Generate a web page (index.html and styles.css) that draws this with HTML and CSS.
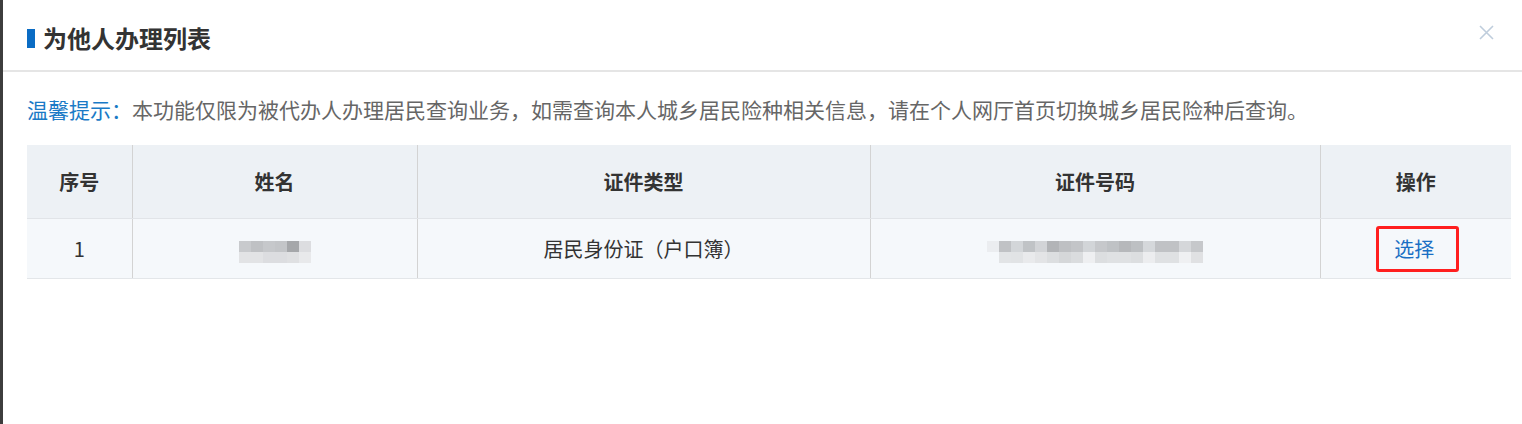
FILE: index.html
```html
<!DOCTYPE html>
<html lang="zh-CN">
<head>
  <meta charset="UTF-8">
  <meta name="viewport" content="width=device-width, initial-scale=1.0">
  <title>为他人办理列表</title>
  <link rel="stylesheet" href="styles.css">
</head>
<body>
  <div class="dialog">
    <div class="dialog-head">
      <h2 class="dialog-title">为他人办理列表</h2>
      <span class="dialog-close" title="关闭">
        <svg width="15" height="15" viewBox="0 0 15 15">
          <path d="M1 1 L14 14 M14 1 L1 14" stroke="#bfcddc" stroke-width="1.6" fill="none"/>
        </svg>
      </span>
    </div>

    <div class="dialog-body">
      <!-- 温馨提示 -->
      <p class="tip"><span class="tip-label">温馨提示：</span>本功能仅限为被代办人办理居民查询业务，如需查询本人城乡居民险种相关信息，请在个人网厅首页切换城乡居民险种后查询。</p>

      <!-- 代办人列表 -->
      <table class="list">
        <colgroup>
          <col class="c-no">
          <col class="c-name">
          <col class="c-type">
          <col class="c-id">
          <col class="c-op">
        </colgroup>
        <thead>
          <tr>
            <th>序号</th>
            <th>姓名</th>
            <th>证件类型</th>
            <th>证件号码</th>
            <th>操作</th>
          </tr>
        </thead>
        <tbody>
          <tr>
            <td>1</td>
            <td>
              <svg class="mosaic" width="72" height="22" viewBox="0 0 72 22">
                <rect x="0" y="0" width="12" height="11" fill="#c8cacd"/>
                <rect x="12" y="0" width="12" height="11" fill="#bfc1c4"/>
                <rect x="24" y="0" width="12" height="11" fill="#c6c8cb"/>
                <rect x="36" y="0" width="12" height="11" fill="#c3c5c8"/>
                <rect x="48" y="0" width="12" height="11" fill="#a5a7aa"/>
                <rect x="60" y="0" width="12" height="11" fill="#dcdde0"/>
                <rect x="0" y="11" width="12" height="11" fill="#e2e3e5"/>
                <rect x="12" y="11" width="12" height="11" fill="#e2e3e5"/>
                <rect x="24" y="11" width="12" height="11" fill="#dcdde0"/>
                <rect x="36" y="11" width="12" height="11" fill="#dcdde0"/>
                <rect x="48" y="11" width="12" height="11" fill="#dfe0e2"/>
                <rect x="60" y="11" width="12" height="11" fill="#e8e9eb"/>
              </svg>
            </td>
            <td>居民身份证（户口簿）</td>
            <td>
              <svg class="mosaic" width="216" height="22" viewBox="0 0 216 22">
                <rect x="0" y="0" width="12" height="11" fill="#ebedf0"/>
                <rect x="12" y="0" width="12" height="11" fill="#c0c2c5"/>
                <rect x="24" y="0" width="12" height="11" fill="#d3d6d9"/>
                <rect x="36" y="0" width="12" height="11" fill="#c0c3c6"/>
                <rect x="48" y="0" width="12" height="11" fill="#d2d4d7"/>
                <rect x="60" y="0" width="12" height="11" fill="#b2b4b7"/>
                <rect x="72" y="0" width="12" height="11" fill="#bec0c3"/>
                <rect x="84" y="0" width="12" height="11" fill="#c3c5c8"/>
                <rect x="96" y="0" width="12" height="11" fill="#d2d5d8"/>
                <rect x="108" y="0" width="12" height="11" fill="#c6c8cb"/>
                <rect x="120" y="0" width="12" height="11" fill="#bfc2c5"/>
                <rect x="132" y="0" width="12" height="11" fill="#b6b8bb"/>
                <rect x="144" y="0" width="12" height="11" fill="#bdc0c3"/>
                <rect x="156" y="0" width="12" height="11" fill="#d5d8db"/>
                <rect x="168" y="0" width="12" height="11" fill="#c0c2c5"/>
                <rect x="180" y="0" width="12" height="11" fill="#c0c2c5"/>
                <rect x="192" y="0" width="12" height="11" fill="#d5d7da"/>
                <rect x="204" y="0" width="12" height="11" fill="#c6c8cb"/>
                <rect x="12" y="11" width="12" height="11" fill="#e2e4e6"/>
                <rect x="24" y="11" width="12" height="11" fill="#e1e3e5"/>
                <rect x="36" y="11" width="12" height="11" fill="#e9eaec"/>
                <rect x="48" y="11" width="12" height="11" fill="#e3e4e6"/>
                <rect x="60" y="11" width="12" height="11" fill="#dcdee0"/>
                <rect x="72" y="11" width="12" height="11" fill="#d5d7d9"/>
                <rect x="84" y="11" width="12" height="11" fill="#dadcde"/>
                <rect x="96" y="11" width="12" height="11" fill="#eeeff1"/>
                <rect x="108" y="11" width="12" height="11" fill="#dcdee0"/>
                <rect x="120" y="11" width="12" height="11" fill="#dfe1e3"/>
                <rect x="132" y="11" width="12" height="11" fill="#dfe1e3"/>
                <rect x="144" y="11" width="12" height="11" fill="#dcdee0"/>
                <rect x="156" y="11" width="12" height="11" fill="#ecedef"/>
                <rect x="168" y="11" width="12" height="11" fill="#dfe1e3"/>
                <rect x="180" y="11" width="12" height="11" fill="#dfe1e3"/>
                <rect x="192" y="11" width="12" height="11" fill="#eff0f2"/>
                <rect x="204" y="11" width="12" height="11" fill="#e0e1e3"/>
              </svg>
            </td>
            <td><span class="mark"><a href="#" class="op-link">选择</a></span></td>
          </tr>
        </tbody>
      </table>
    </div>
  </div>
</body>
</html>
```

FILE: styles.css
```css
/* 基础 */
body {
  margin: 0;
  padding: 0;
  background-color: #3d3d3d;
  font-family: "Microsoft YaHei", "Noto Sans CJK SC", sans-serif;
  color: #333;
}

.dialog {
  margin-left: 3px;
  height: 100vh;
  background-color: #fff;
}

/* 标题栏 */
.dialog-head {
  box-sizing: border-box;
  height: 72px;
  padding: 27px 28px 0 24px;
  border-bottom: 2px solid #e5e5e5;
  display: flex;
  justify-content: space-between;
  align-items: flex-start;
}

.dialog-title {
  margin: 0;
  display: flex;
  align-items: center;
  gap: 8px;
  font-size: 24px;
  line-height: 22px;
  font-weight: bold;
  color: #333;
}

.dialog-title::before {
  content: "";
  flex-shrink: 0;
  width: 8px;
  height: 19px;
  background-color: #0a6cc4;
}

.dialog-close {
  margin-top: -2px;
  width: 15px;
  height: 15px;
  cursor: pointer;
}

.dialog-close svg {
  display: block;
}

/* 内容 */
.dialog-body {
  padding: 0 11px 0 24px;
}

.tip {
  margin: 23px 0 22px;
  font-size: 21px;
  line-height: 28px;
  color: #666;
}

.tip-label {
  color: #1a7ac6;
}

/* 表格 */
.list {
  width: 100%;
  table-layout: fixed;
  border-collapse: collapse;
  font-size: 20px;
  text-align: center;
}

.c-no { width: 105px; }
.c-name { width: 285px; }
.c-type { width: 453px; }
.c-id { width: 450px; }
.c-op { width: 191px; }

.list th {
  height: 73px;
  padding: 0;
  background-color: #edf1f5;
  border-bottom: 1px solid #e1e4e8;
  font-weight: bold;
  color: #333;
}

.list td {
  height: 59px;
  padding: 0;
  background-color: #f5f8fb;
  border-bottom: 1px solid #e3e6e9;
  color: #333;
}

.list th + th,
.list td + td {
  border-left: 1px solid #d3d3d3;
}

.mosaic {
  display: inline-block;
  vertical-align: middle;
}

/* 截图标注框 */
.mark {
  display: inline-block;
  padding: 9px 22px 9px 15px;
  border: 3px solid #ff1f1f;
  border-radius: 3px;
  line-height: 22px;
  margin-left: 4px;
}

.op-link {
  color: #1a6fc4;
  text-decoration: none;
}
```
